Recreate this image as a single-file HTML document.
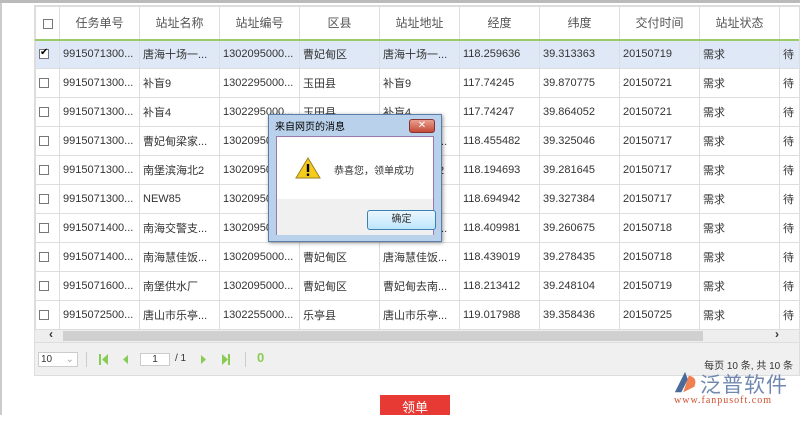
<!DOCTYPE html>
<html><head><meta charset="utf-8"><style>
*{margin:0;padding:0;box-sizing:border-box}
body{width:800px;height:415px;overflow:hidden;background:#fff;font-family:"Liberation Sans","Noto Sans CJK SC",sans-serif;font-size:11px;color:#333;position:relative}
.top{position:absolute;left:0;top:0;width:800px;height:3px;background:#bbb}
.lb{position:absolute;left:0;top:3px;width:2px;height:412px;background:#ccc}
.wrap{position:absolute;left:34px;top:5px;width:766px;height:371px;border:1px solid #ddd;background:#fff;overflow:hidden}
table{border-collapse:collapse;table-layout:fixed;width:800px}
td{border:1px solid #ddd;height:29px;padding:0 3px;white-space:nowrap;overflow:hidden;font-size:11px}
tr.h td{height:33px;text-align:center;color:#555;font-size:12px;border-bottom:2px solid #9c6}
tr.sel td{background:#dfe8f6}
.cb{display:inline-block;width:10px;height:10px;border:1px solid #777;background:#fff;vertical-align:middle;position:relative}
.cb.on:after{content:"✔";position:absolute;left:0;top:-3px;font-size:10px;color:#000}
.sb{position:absolute;left:0;top:324px;width:766px;height:12px;background:#eee}
.thumb{position:absolute;left:28px;top:1px;width:640px;height:10px;background:#d0d0d0}
.pg{position:absolute;left:0;top:336px;width:766px;height:35px;background:#f0f0f0;border-top:1px solid #ddd}
.dlg{position:absolute;left:268px;top:114px;width:174px;height:128px;background:#b9d1ea;border:1px solid #5a7ea8;box-shadow:1px 1px 4px rgba(0,0,0,.4)}
.dlg .body{position:absolute;left:7px;top:21px;width:158px;height:99px;background:#fff;border:1px solid #97a}
.dlg .foot{position:absolute;left:0;top:62px;width:156px;height:36px;background:#f0f0f0}
.btn{position:absolute;left:90px;top:73px;width:69px;height:20px;border:1px solid #3c7fb1;border-radius:3px;background:linear-gradient(#eaf6fd,#bee6fd);font-size:10px;text-align:center;line-height:18px}
</style></head><body>
<div class="top"></div><div class="lb"></div>
<div class="wrap">
<table>
<colgroup><col style="width:24px"><col style="width:80px"><col style="width:80px"><col style="width:80px"><col style="width:80px"><col style="width:80px"><col style="width:80px"><col style="width:80px"><col style="width:80px"><col style="width:80px"><col style="width:56px"></colgroup>
<tr class="h"><td><span class="cb"></span></td><td>任务单号</td><td>站址名称</td><td>站址编号</td><td>区县</td><td>站址地址</td><td>经度</td><td>纬度</td><td>交付时间</td><td>站址状态</td><td></td></tr>
<tr class="sel"><td><span class="cb on"></span></td><td>9915071300...</td><td>唐海十场一...</td><td>1302095000...</td><td>曹妃甸区</td><td>唐海十场一...</td><td>118.259636</td><td>39.313363</td><td>20150719</td><td>需求</td><td>待</td></tr>
<tr><td><span class="cb"></span></td><td>9915071300...</td><td>补盲9</td><td>1302295000...</td><td>玉田县</td><td>补盲9</td><td>117.74245</td><td>39.870775</td><td>20150721</td><td>需求</td><td>待</td></tr>
<tr><td><span class="cb"></span></td><td>9915071300...</td><td>补盲4</td><td>1302295000...</td><td>玉田县</td><td>补盲4</td><td>117.74247</td><td>39.864052</td><td>20150721</td><td>需求</td><td>待</td></tr>
<tr><td><span class="cb"></span></td><td>9915071300...</td><td>曹妃甸梁家...</td><td>1302095000...</td><td>曹妃甸区</td><td>曹妃甸梁家...</td><td>118.455482</td><td>39.325046</td><td>20150717</td><td>需求</td><td>待</td></tr>
<tr><td><span class="cb"></span></td><td>9915071300...</td><td>南堡滨海北2</td><td>1302095000...</td><td>曹妃甸区</td><td>南堡滨海北2</td><td>118.194693</td><td>39.281645</td><td>20150717</td><td>需求</td><td>待</td></tr>
<tr><td><span class="cb"></span></td><td>9915071300...</td><td>NEW85</td><td>1302095000...</td><td>曹妃甸区</td><td>NEW85</td><td>118.694942</td><td>39.327384</td><td>20150717</td><td>需求</td><td>待</td></tr>
<tr><td><span class="cb"></span></td><td>9915071400...</td><td>南海交警支...</td><td>1302095000...</td><td>曹妃甸区</td><td>南海交警支...</td><td>118.409981</td><td>39.260675</td><td>20150718</td><td>需求</td><td>待</td></tr>
<tr><td><span class="cb"></span></td><td>9915071400...</td><td>南海慧佳饭...</td><td>1302095000...</td><td>曹妃甸区</td><td>唐海慧佳饭...</td><td>118.439019</td><td>39.278435</td><td>20150718</td><td>需求</td><td>待</td></tr>
<tr><td><span class="cb"></span></td><td>9915071600...</td><td>南堡供水厂</td><td>1302095000...</td><td>曹妃甸区</td><td>曹妃甸去南...</td><td>118.213412</td><td>39.248104</td><td>20150719</td><td>需求</td><td>待</td></tr>
<tr><td><span class="cb"></span></td><td>9915072500...</td><td>唐山市乐亭...</td><td>1302255000...</td><td>乐亭县</td><td>唐山市乐亭...</td><td>119.017988</td><td>39.358436</td><td>20150725</td><td>需求</td><td>待</td></tr>
</table>
<div class="sb"><div class="thumb"></div><span style="position:absolute;left:14px;top:-3px;font-size:12px;font-weight:bold">‹</span><span style="position:absolute;left:740px;top:-3px;font-size:12px;font-weight:bold">›</span></div>
<div class="pg">
<div style="position:absolute;left:3px;top:9px;width:40px;height:15px;border:1px solid #ccc;background:#fff;font-size:10px;padding-left:2px;line-height:13px">10<span style="float:right;color:#aaa;margin-right:3px">⌄</span></div>
<div style="position:absolute;left:51px;top:9px;width:1px;height:15px;background:#ccc"></div>
<svg style="position:absolute;left:62px;top:10px" width="160" height="14" viewBox="0 0 160 14">
<g fill="#8c5"><rect x="2" y="1" width="2" height="11"/><path d="M11 1 L5 6.5 L11 12Z"/>
<path d="M31 2 L26 6.5 L31 11Z"/>
<path d="M104 2 L109 6.5 L104 11Z"/>
<path d="M125 1 L131 6.5 L125 12Z"/><rect x="131" y="1" width="2" height="11"/></g>
</svg>
<div style="position:absolute;left:105px;top:10px;width:30px;height:13px;border:1px solid #ccc;background:#fff;font-size:10px;text-align:center;line-height:11px">1</div>
<span style="position:absolute;left:140px;top:10px;font-size:10px">/ 1</span>
<div style="position:absolute;left:210px;top:9px;width:1px;height:15px;background:#ccc"></div>
<span style="position:absolute;left:222px;top:7px;color:#8c5;font-size:13px;font-weight:bold">0</span>
<span style="position:absolute;right:8px;top:14px;font-size:10px;color:#333">每页 10 条, 共 10 条</span>
</div>
</div>
<div class="dlg">
<div style="position:absolute;left:6px;top:3px;font-size:10px;color:#000">来自网页的消息</div>
<div style="position:absolute;left:140px;top:4px;width:26px;height:14px;background:linear-gradient(#e8a090,#c44a36);border:1px solid #833;border-radius:3px;color:#fff;font-size:10px;text-align:center;line-height:12px">✕</div>
<div class="body">
<svg style="position:absolute;left:18px;top:20px" width="26" height="22" viewBox="0 0 26 22"><path d="M13 1 L25 21 L1 21 Z" fill="#f5cc1a" stroke="#a08020"/><rect x="11.8" y="7" width="2.4" height="8" fill="#000"/><rect x="11.8" y="16.5" width="2.4" height="2.4" fill="#000"/></svg>
<div style="position:absolute;left:57px;top:25px;font-size:10px">恭喜您，领单成功</div>
<div class="foot"></div>
<div class="btn">确定</div>
</div>
</div>
<div style="position:absolute;left:380px;top:395px;width:70px;height:20px;background:#e83a34;color:#fff;text-align:center;font-size:13px;line-height:26px">领单</div>
<div style="position:absolute;left:672px;top:370px">
<svg width="28" height="26" viewBox="0 0 30 28"><path d="M14 2 L3 24 L10 24 L17 10 Z" fill="#4a6a9a"/><path d="M18 6 Q28 8 24 18 L12 24 Z" fill="#f08050"/></svg>
</div>
<div style="position:absolute;left:700px;top:369px;font-size:21px;color:#7088b0;letter-spacing:1px">泛普软件</div>
<div style="position:absolute;left:674px;top:395px;font-size:10px;color:#d05030;font-family:'Liberation Serif',serif;letter-spacing:1px">www.fanpusoft.com</div>
</body></html>
